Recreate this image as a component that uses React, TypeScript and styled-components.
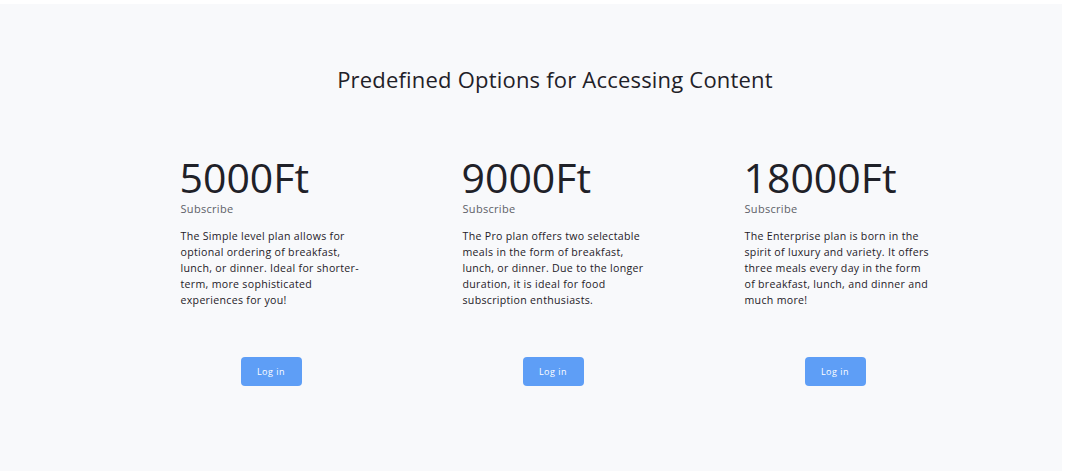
import React from "react";
import styled, { createGlobalStyle } from "styled-components";

const GlobalStyle = createGlobalStyle`
  html, body { margin: 0; padding: 0; background: #ffffff; }
  body { font-family: "Open Sans", "Liberation Sans", sans-serif; }
  * { box-sizing: border-box; }
`;

const Panel = styled.main`
  margin: 4px 3px 0 0;
  min-height: 467px;
  background: #f8f9fb;
  padding: 61px 0 0 48px;
  display: flex;
  flex-direction: column;
  align-items: center;
`;

const Title = styled.h1`
  margin: 0;
  font-family: "Open Sans", sans-serif;
  font-weight: 400;
  font-size: 22px;
  line-height: 28px;
  color: #1f2128;
  letter-spacing: 0.2px;
`;

const Plans = styled.section`
  margin: 64px 0 0 -4px;
  display: grid;
  grid-template-columns: repeat(3, 181px);
  column-gap: 101px;
`;

const Plan = styled.article`
  display: flex;
  flex-direction: column;
  align-items: flex-start;
`;

const Price = styled.div`
  font-family: "Open Sans", sans-serif;
  font-size: 41px;
  line-height: 44px;
  font-weight: 400;
  color: #1f2128;
  margin-left: -1px;
  margin-top: -2px;
`;

const Sub = styled.div`
  margin-top: 3px;
  font-size: 11px;
  line-height: 14px;
  color: #5d6068;
  letter-spacing: 0.3px;
`;

const Desc = styled.p`
  margin: 12px 0 0;
  width: 190px;
  font-size: 10.6px;
  line-height: 16px;
  color: #1f2128;
  letter-spacing: 0.3px;
`;

const ButtonRow = styled.div`
  align-self: stretch;
  display: flex;
  justify-content: center;
  margin-top: auto;
  padding-top: 49px;
`;

const LoginButton = styled.button`
  width: 61px;
  height: 29px;
  border: none;
  border-radius: 4px;
  background: #5e9ef6;
  color: #ffffff;
  font-family: "Open Sans", sans-serif;
  font-size: 9px;
  letter-spacing: 0.5px;
  cursor: pointer;
`;

const plans = [
  {
    price: "5000Ft",
    text: "The Simple level plan allows for optional ordering of breakfast, lunch, or dinner. Ideal for shorter-term, more sophisticated experiences for you!",
  },
  {
    price: "9000Ft",
    text: "The Pro plan offers two selectable meals in the form of breakfast, lunch, or dinner. Due to the longer duration, it is ideal for food subscription enthusiasts.",
  },
  {
    price: "18000Ft",
    text: "The Enterprise plan is born in the spirit of luxury and variety. It offers three meals every day in the form of\u00a0breakfast, lunch, and dinner and much more!",
  },
];

export default function App() {
  return (
    <>
      <GlobalStyle />
      <Panel>
        <Title>Predefined Options for Accessing Content</Title>
        <Plans>
          {plans.map((p) => (
            <Plan key={p.price}>
              <Price>{p.price}</Price>
              <Sub>Subscribe</Sub>
              <Desc>{p.text}</Desc>
              <ButtonRow>
                <LoginButton>Log in</LoginButton>
              </ButtonRow>
            </Plan>
          ))}
        </Plans>
      </Panel>
    </>
  );
}
